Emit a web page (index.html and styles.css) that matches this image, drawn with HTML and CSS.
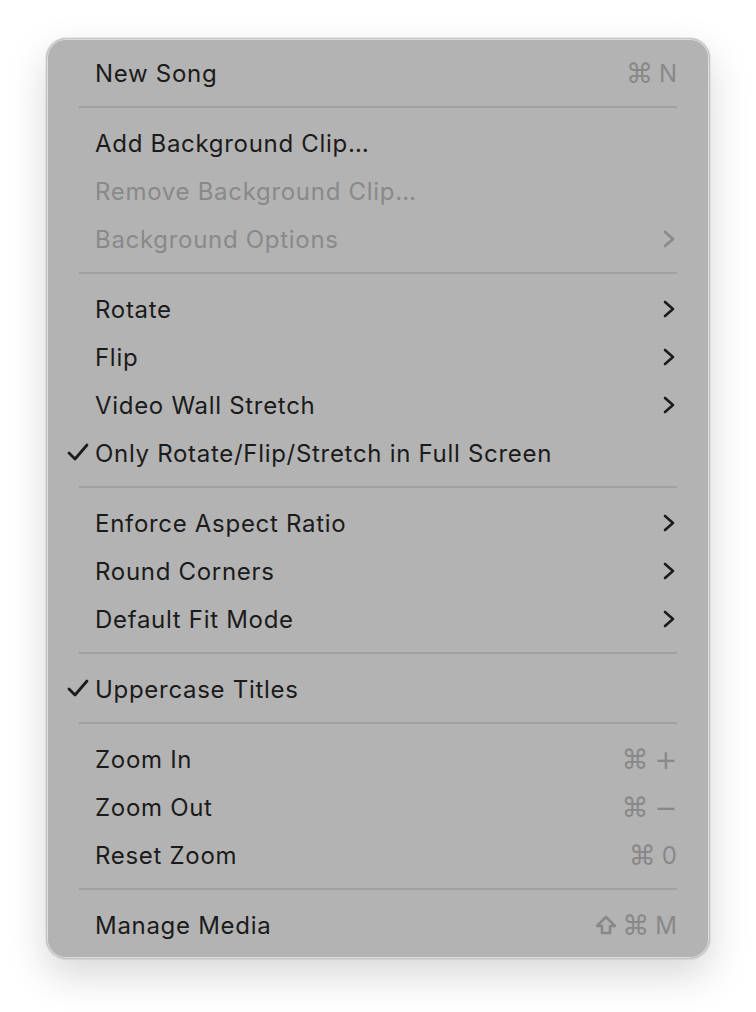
FILE: index.html
```html
<!DOCTYPE html>
<html lang="en">

<head>
  <meta charset="utf-8">
  <title>Menu</title>
  <link rel="stylesheet" href="styles.css">
</head>

<body>
  <div class="menu">
    <div class="menu-item">
      <span class="label">New Song</span>
      <span class="shortcut"><span class="key-sym">⌘</span>N</span>
    </div>
    <div class="separator"></div>
    <div class="menu-item">
      <span class="label">Add Background Clip…</span>
    </div>
    <div class="menu-item disabled">
      <span class="label">Remove Background Clip…</span>
    </div>
    <div class="menu-item disabled">
      <span class="label">Background Options</span>
      <svg class="chevron" viewBox="0 0 12 18"><path d="M2 2 L10 9 L2 16" /></svg>
    </div>
    <div class="separator"></div>
    <div class="menu-item">
      <span class="label">Rotate</span>
      <svg class="chevron" viewBox="0 0 12 18"><path d="M2 2 L10 9 L2 16" /></svg>
    </div>
    <div class="menu-item">
      <span class="label">Flip</span>
      <svg class="chevron" viewBox="0 0 12 18"><path d="M2 2 L10 9 L2 16" /></svg>
    </div>
    <div class="menu-item">
      <span class="label">Video Wall Stretch</span>
      <svg class="chevron" viewBox="0 0 12 18"><path d="M2 2 L10 9 L2 16" /></svg>
    </div>
    <div class="menu-item">
      <svg class="check" viewBox="0 0 22 18"><path d="M2 10 L8 16 L20 2" /></svg>
      <span class="label">Only Rotate/Flip/Stretch in Full Screen</span>
    </div>
    <div class="separator"></div>
    <div class="menu-item">
      <span class="label">Enforce Aspect Ratio</span>
      <svg class="chevron" viewBox="0 0 12 18"><path d="M2 2 L10 9 L2 16" /></svg>
    </div>
    <div class="menu-item">
      <span class="label">Round Corners</span>
      <svg class="chevron" viewBox="0 0 12 18"><path d="M2 2 L10 9 L2 16" /></svg>
    </div>
    <div class="menu-item">
      <span class="label">Default Fit Mode</span>
      <svg class="chevron" viewBox="0 0 12 18"><path d="M2 2 L10 9 L2 16" /></svg>
    </div>
    <div class="separator"></div>
    <div class="menu-item">
      <svg class="check" viewBox="0 0 22 18"><path d="M2 10 L8 16 L20 2" /></svg>
      <span class="label">Uppercase Titles</span>
    </div>
    <div class="separator"></div>
    <div class="menu-item">
      <span class="label">Zoom In</span>
      <span class="shortcut"><span class="key-sym">⌘</span><span class="key-big">+</span></span>
    </div>
    <div class="menu-item">
      <span class="label">Zoom Out</span>
      <span class="shortcut"><span class="key-sym">⌘</span><span class="key-big">−</span></span>
    </div>
    <div class="menu-item">
      <span class="label">Reset Zoom</span>
      <span class="shortcut"><span class="key-sym">⌘</span>0</span>
    </div>
    <div class="separator"></div>
    <div class="menu-item">
      <span class="label">Manage Media</span>
      <span class="shortcut">
        <svg class="shift" viewBox="0 0 22 20"><path d="M11 2 L20 11 L15 11 L15 18 L7 18 L7 11 L2 11 Z" /></svg>
        <span class="key-sym">⌘</span>M
      </span>
    </div>
  </div>
</body>

</html>
```

FILE: styles.css
```css
html,
body {
  margin: 0;
  background-color: #ffffff;
}

body {
  box-sizing: border-box;
  min-height: 100vh;
  padding: 38px 0 0 46px;
  font-family: Inter, "Liberation Sans", sans-serif;
  -webkit-font-smoothing: antialiased;
}

.menu {
  box-sizing: border-box;
  width: 664px;
  padding: 10px 32px 9px 32px;
  background-color: #b3b3b3;
  border: 1px solid #c4c4c4;
  border-radius: 20px;
  box-shadow:
    inset 0 0 0 1px rgba(255, 255, 255, 0.55),
    0 0 0 1px rgba(0, 0, 0, 0.06),
    0 16px 40px rgba(0, 0, 0, 0.16);
}

.menu-item {
  position: relative;
  display: flex;
  align-items: center;
  height: 48px;
  padding-left: 16px;
  font-size: 24px;
  color: #1b1b1b;
  letter-spacing: 0.7px;
}

.menu-item .label {
  flex: 1;
  white-space: nowrap;
}

.menu-item.disabled {
  color: #898989;
}

.shortcut {
  display: flex;
  align-items: center;
  color: #888888;
  font-size: 24px;
  letter-spacing: 0;
}

.key-sym {
  font-family: "DejaVu Sans", sans-serif;
  font-size: 27px;
  margin-right: 6px;
}

.key-big {
  font-family: "DejaVu Sans", sans-serif;
  font-size: 27px;
  line-height: 1;
}

.shift {
  width: 22px;
  height: 20px;
  margin-right: 5px;
  fill: none;
  stroke: #888888;
  stroke-width: 2.6;
  stroke-linejoin: round;
}

.chevron {
  width: 12px;
  height: 18px;
  margin-right: 2px;
  fill: none;
  stroke: #1b1b1b;
  stroke-width: 2.6;
  stroke-linecap: round;
  stroke-linejoin: round;
}

.disabled .chevron {
  stroke: #898989;
}

.check {
  position: absolute;
  left: -12px;
  top: 14px;
  width: 22px;
  height: 18px;
  fill: none;
  stroke: #1b1b1b;
  stroke-width: 2.8;
  stroke-linecap: round;
  stroke-linejoin: round;
}

.separator {
  height: 2px;
  margin: 9px 0 11px 0;
  background-color: #a1a1a1;
}
```
